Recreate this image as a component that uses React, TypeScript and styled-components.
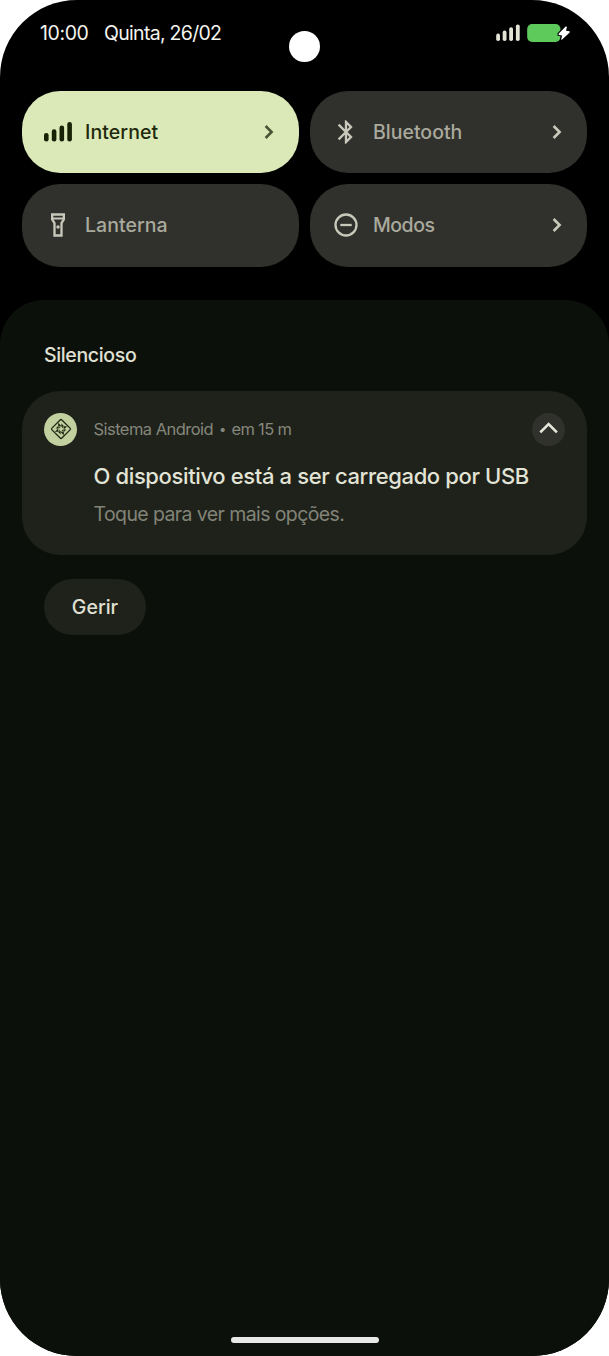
import * as React from 'react';

import styled, { createGlobalStyle } from 'styled-components';

type IconName = 'signal' | 'bluetooth' | 'flashlight' | 'modes';

type Tile = {
  label: string;
  icon: IconName;
  active?: boolean;
  chevron?: boolean;
  spacing: number;
};

const tiles: Tile[] = [
  { label: 'Internet', icon: 'signal', active: true, chevron: true, spacing: 0.1 },
  { label: 'Bluetooth', icon: 'bluetooth', chevron: true, spacing: 0 },
  { label: 'Lanterna', icon: 'flashlight', spacing: 0.05 },
  { label: 'Modos', icon: 'modes', chevron: true, spacing: -0.5 },
];

const SignalIcon = () => (
  <svg width="28" height="22" viewBox="0 0 28 22" fill="currentColor">
    <rect x="0" y="12" width="4.6" height="8.4" rx="2.2" />
    <rect x="7.8" y="8.2" width="4.6" height="12.2" rx="2.2" />
    <rect x="15.5" y="4.5" width="4.6" height="15.9" rx="2.2" />
    <rect x="23.3" y="1" width="4.6" height="19.4" rx="2.2" />
  </svg>
);

const BluetoothIcon = () => (
  <svg width="28" height="28" viewBox="0 0 24 24" fill="currentColor">
    <path d="M17.71 7.71L12 2h-1v7.59L6.41 5 5 6.41 10.59 12 5 17.59 6.41 19 11 14.41V22h1l5.71-5.71-4.3-4.29 4.3-4.29zM13 5.83l1.88 1.88L13 9.59V5.83zm1.88 10.46L13 18.17v-3.76l1.88 1.88z" />
  </svg>
);

const FlashlightIcon = () => (
  <svg width="28" height="28" viewBox="0 0 24 24" fill="none" stroke="currentColor" strokeWidth="2">
    <path d="M7 3h10v4.3l-2 3V21H9V10.3l-2-3z" />
    <path d="M7 6.4h10" strokeWidth="1.6" />
    <circle cx="12" cy="13.8" r="1.5" fill="currentColor" stroke="none" />
  </svg>
);

const ModesIcon = () => (
  <svg width="28" height="28" viewBox="0 0 28 28" fill="none" stroke="currentColor" strokeWidth="2.3">
    <circle cx="14" cy="14" r="10.5" />
    <path d="M8.3 14h11.4" />
  </svg>
);

const icons: Record<IconName, React.FC> = {
  signal: SignalIcon,
  bluetooth: BluetoothIcon,
  flashlight: FlashlightIcon,
  modes: ModesIcon,
};

const Chevron = () => (
  <svg width="10" height="14" viewBox="0 0 10 14" fill="none" stroke="currentColor" strokeWidth="2.6">
    <path d="M1.6 1l6 6-6 6" />
  </svg>
);

const StatusSignal = () => (
  <svg width="24" height="18" viewBox="0 0 24 18" fill="#e3e3d6">
    <rect x="0.2" y="9.6" width="3.8" height="7.4" rx="1.8" />
    <rect x="6.7" y="6.5" width="3.8" height="10.5" rx="1.8" />
    <rect x="13.2" y="3.2" width="3.8" height="13.8" rx="1.8" />
    <rect x="19.9" y="0.4" width="3.8" height="16.6" rx="1.8" />
  </svg>
);

const Battery = () => (
  <svg width="44" height="20" viewBox="0 0 44 20">
    <rect x="0.2" y="1" width="33.3" height="18" rx="5" fill="#5fca5c" />
    <path
      d="M38.6 3.4L31.6 10.8v1.1l3.6.5-1.1 4.1.8.2 7.8-7.3v-1.1l-3.7-.5 1-4.1z"
      fill="#fff"
      stroke="#000"
      strokeWidth="2.2"
      paintOrder="stroke"
    />
  </svg>
);

const AndroidSystemIcon = () => (
  <svg width="22" height="22" viewBox="-11 -11 22 22">
    <g transform="rotate(45)" fill="none" stroke="#1e2712">
      <rect x="-7" y="-7" width="14" height="14" rx="1.2" strokeWidth="1.3" />
    </g>
    {[0, 90, 180, 270].map((angle) => (
      <g key={angle} transform={`rotate(${angle})`} fill="#1e2712">
        <path d="M-2.8 -6.2v3.4h3.4z" />
        <path d="M0.4 -5.4v2.8h2.8z" />
        <path d="M-2.4 -2.2h2l-2 2z" />
      </g>
    ))}
  </svg>
);

const QuickTile = (props: { tile: Tile }) => {
  const Icon = icons[props.tile.icon];

  return (
    <StyledTile $active={props.tile.active}>
      <StyledTileIcon>
        <Icon />
      </StyledTileIcon>
      <StyledTileLabel $active={props.tile.active} $spacing={props.tile.spacing}>
        {props.tile.label}
      </StyledTileLabel>
      {props.tile.chevron && <Chevron />}
    </StyledTile>
  );
};

const App = () => (
  <>
    <GlobalStyle />
    <StyledDevice>
      <StyledCamera />
      <StyledStatusBar>
        <StyledClock>10:00</StyledClock>
        <StyledDate>Quinta, 26/02</StyledDate>
        <StyledStatusIcons>
          <StatusSignal />
          <Battery />
        </StyledStatusIcons>
      </StyledStatusBar>

      <StyledTiles>
        {tiles.map((tile) => (
          <QuickTile key={tile.label} tile={tile} />
        ))}
      </StyledTiles>

      <StyledShade>
        <StyledSection>Silencioso</StyledSection>
        <StyledCard>
          <StyledAvatar>
            <AndroidSystemIcon />
          </StyledAvatar>
          <StyledCardBody>
            <StyledMeta>
              <StyledAppName>Sistema Android</StyledAppName>
              <StyledDot>•</StyledDot>
              <StyledTime>em 15 m</StyledTime>
            </StyledMeta>
            <StyledTitle>O dispositivo está a ser carregado por USB</StyledTitle>
            <StyledText>Toque para ver mais opções.</StyledText>
          </StyledCardBody>
          <StyledCollapse>
            <svg width="20" height="12" viewBox="0 0 20 12" fill="none" stroke="#e6e7da" strokeWidth="2.6">
              <path d="M1.3 10.4L9.6 2.2l8.3 8.2" />
            </svg>
          </StyledCollapse>
        </StyledCard>
        <StyledManage>Gerir</StyledManage>
        <StyledHomeBar />
      </StyledShade>
    </StyledDevice>
  </>
);

export default App;

const GlobalStyle = createGlobalStyle`
  body {
    margin: 0;
    background: #fff;
    font-family: 'Google Sans', Inter, Roboto, sans-serif;
  }

  * {
    box-sizing: border-box;
  }

  svg {
    display: block;
    flex: none;
  }
`;

const StyledDevice = styled.div`
  position: relative;
  display: flex;
  flex-direction: column;
  width: 609px;
  height: 1356px;
  overflow: hidden;
  border-radius: 77px;
  background: #000;
`;

const StyledCamera = styled.div`
  position: absolute;
  top: 31px;
  left: 288.5px;
  width: 31px;
  height: 31px;
  border-radius: 50%;
  background: #fff;
`;

const StyledStatusBar = styled.div`
  display: flex;
  align-items: center;
  height: 91px;
  padding: 0 38px 25px 40px;
  color: #f4f4ee;
  font-size: 19.5px;
  line-height: 24px;
  white-space: nowrap;
`;

const StyledClock = styled.span`
  width: 64px;
  letter-spacing: -0.4px;
`;

const StyledDate = styled.span`
  letter-spacing: -0.7px;
`;

const StyledStatusIcons = styled.div`
  display: flex;
  align-items: center;
  gap: 7px;
  margin-left: auto;
`;

const StyledTiles = styled.div`
  display: grid;
  grid-template-columns: 277px 277px;
  grid-auto-rows: 82.3px;
  gap: 11px;
  padding: 0 22px;
`;

const StyledTile = styled.div<{ $active?: boolean }>`
  display: flex;
  align-items: center;
  padding: 0 25px 0 22px;
  border-radius: 38px;
  background: ${(props) => (props.$active ? '#dbe9b8' : '#30312c')};
  color: ${(props) => (props.$active ? '#4a5434' : '#c8c8bb')};

  ${(props) => props.$active && '& > :first-child { color: #172104; }'}
`;

const StyledTileIcon = styled.div`
  width: 28px;
`;

const StyledTileLabel = styled.span<{ $active?: boolean; $spacing: number }>`
  flex: 1;
  margin-left: 13px;
  color: ${(props) => (props.$active ? '#1f290c' : '#a9a99d')};
  font-size: 19.5px;
  font-weight: 500;
  line-height: 24px;
  letter-spacing: ${(props) => props.$spacing}px;
`;

const StyledShade = styled.div`
  display: flex;
  flex: 1;
  flex-direction: column;
  margin-top: 33.4px;
  padding: 0 22px 13.5px;
  border-radius: 44px 44px 0 0;
  background: #0c100a;
`;

const StyledSection = styled.h2`
  margin: 43px 0 24px 22px;
  color: #e0e1d4;
  font-size: 19.5px;
  font-weight: 500;
  line-height: 24px;
  letter-spacing: -0.35px;
`;

const StyledCard = styled.div`
  display: flex;
  align-items: flex-start;
  height: 164px;
  padding: 22px;
  border-radius: 38px;
  background: #1f211b;
`;

const StyledAvatar = styled.div`
  display: grid;
  place-items: center;
  width: 33px;
  height: 33px;
  border-radius: 50%;
  background: #c2cf9e;
`;

const StyledCardBody = styled.div`
  flex: 1;
  min-width: 0;
  margin-left: 16.5px;
  white-space: nowrap;
`;

const StyledMeta = styled.div`
  display: flex;
  height: 33px;
  align-items: center;
  padding-bottom: 1px;
  color: #85877b;
  font-size: 16.5px;
  letter-spacing: -0.54px;
`;

const StyledAppName = styled.span`
  width: 125.5px;
`;

const StyledDot = styled.span`
  width: 12.5px;
  font-size: 13px;
`;

const StyledTime = styled.span`
  letter-spacing: -0.7px;
`;

const StyledTitle = styled.div`
  margin-top: 16px;
  color: #e2e4d5;
  font-size: 22px;
  font-weight: 500;
  line-height: 28px;
  letter-spacing: -0.37px;
`;

const StyledText = styled.div`
  margin-top: 12px;
  color: #828478;
  font-size: 19.5px;
  line-height: 24px;
  letter-spacing: -0.6px;
`;

const StyledCollapse = styled.div`
  display: grid;
  place-items: center;
  width: 33px;
  height: 33px;
  padding-bottom: 3px;
  border-radius: 50%;
  background: #30312c;
`;

const StyledManage = styled.div`
  display: grid;
  place-items: center;
  width: 102px;
  height: 56px;
  margin: 24px 0 0 22px;
  border-radius: 28px;
  background: #1f211b;
  color: #e0e1d4;
  font-size: 19.5px;
  font-weight: 500;
`;

const StyledHomeBar = styled.div`
  width: 148px;
  height: 6px;
  margin: auto auto 0;
  border-radius: 3px;
  background: #e8e8e6;
`;
